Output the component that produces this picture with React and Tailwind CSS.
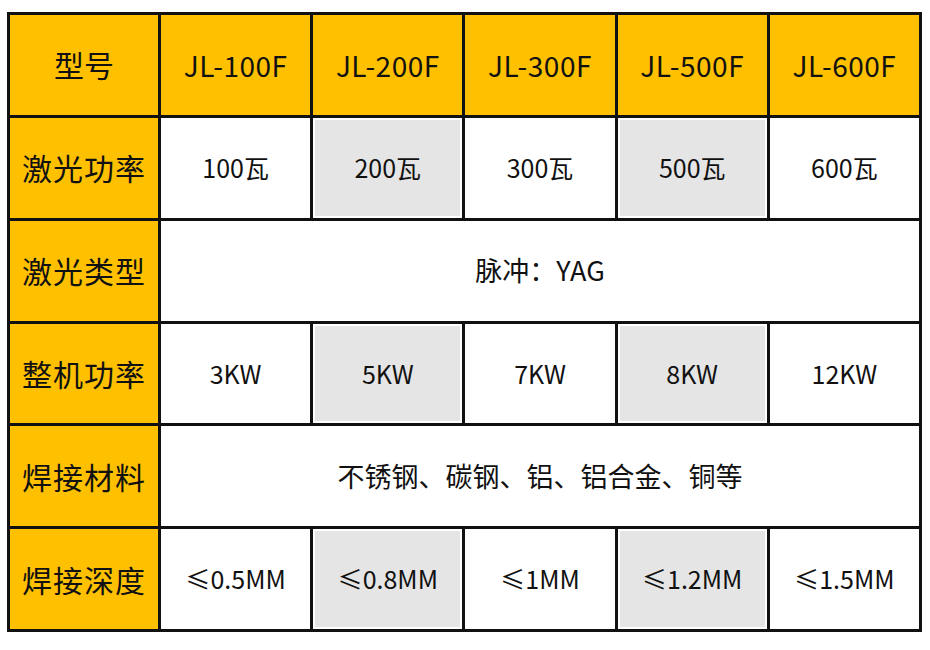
import React from 'react';

const models = ['JL-100F', 'JL-200F', 'JL-300F', 'JL-500F', 'JL-600F'];

const rows = [
    { label: '激光功率', values: ['100瓦', '200瓦', '300瓦', '500瓦', '600瓦'] },
    { label: '激光类型', span: '脉冲：YAG' },
    { label: '整机功率', values: ['3KW', '5KW', '7KW', '8KW', '12KW'] },
    { label: '焊接材料', span: '不锈钢、碳钢、铝、铝合金、铜等' },
    { label: '焊接深度', values: ['≤0.5MM', '≤0.8MM', '≤1MM', '≤1.2MM', '≤1.5MM'] },
];

const font = { fontFamily: '"Noto Sans CJK SC", "Noto Sans", sans-serif' };

const App = () => {
    return (
        <div className="w-[930px] h-[650px] bg-white pt-[12px] pl-[7px]" style={font}>
            <div className="w-[915px] h-[620px] bg-[#111] p-[3px] grid grid-cols-[148px_repeat(5,1fr)] grid-rows-6 gap-[3px] text-[#111]">
                {/* header row */}
                <div className="bg-[#ffc000] flex items-center justify-center text-[30px]">型号</div>
                {models.map((m) => (
                    <div key={m} className="bg-[#ffc000] flex items-center justify-center text-[28px] tracking-[0.5px]">
                        {m}
                    </div>
                ))}

                {rows.map((row) => (
                    <React.Fragment key={row.label}>
                        <div className="bg-[#ffc000] flex items-center justify-center text-[30px] tracking-[1px]">
                            {row.label}
                        </div>
                        {row.span ? (
                            <div className="col-span-5 bg-white flex items-center justify-center text-[27px]">
                                {row.span}
                            </div>
                        ) : (
                            row.values.map((v, i) => (
                                <div key={v} className="bg-white p-[2px] flex">
                                    <div
                                        className={
                                            i === 1 || i === 3
                                                ? 'flex-1 bg-[#e5e5e5] flex items-center justify-center text-[25px]'
                                                : 'flex-1 bg-white flex items-center justify-center text-[25px]'
                                        }
                                    >
                                        {v}
                                    </div>
                                </div>
                            ))
                        )}
                    </React.Fragment>
                ))}
            </div>
        </div>
    );
};

export default App;
